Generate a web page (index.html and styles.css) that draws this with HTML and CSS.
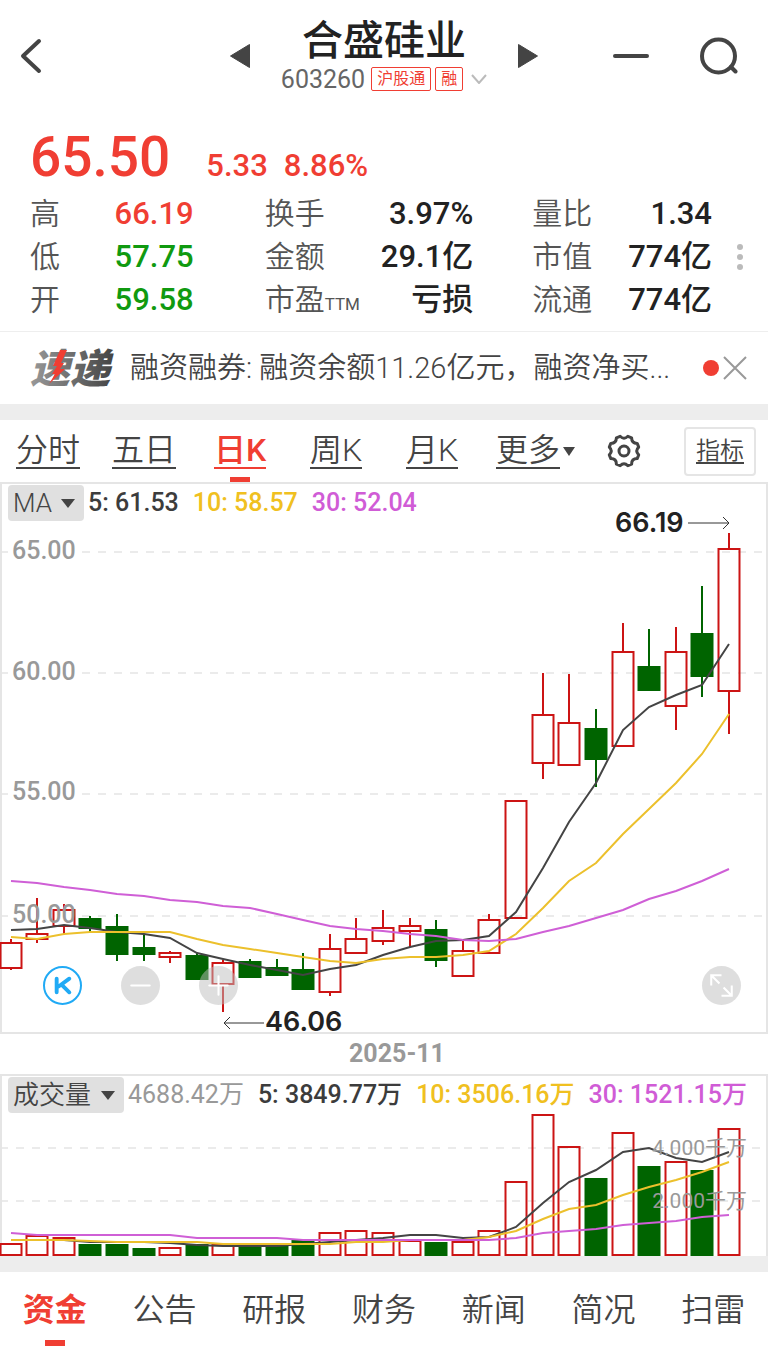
FILE: index.html
```html
<!DOCTYPE html>
<html lang="zh-CN">
<head>
    <meta charset="UTF-8">
    <meta name="viewport" content="width=device-width, initial-scale=1.0">
    <title>合盛硅业 603260</title>
    <link rel="stylesheet" href="styles.css">
</head>
<body>
    <header class="header">
        <div class="header-side">
            <button type="button" class="icon-btn" aria-label="返回">
                <svg width="22" height="36" viewBox="0 0 22 36"><path d="M19 3L3 18L19 33" fill="none" stroke="#444" stroke-width="4" stroke-linecap="round" stroke-linejoin="round"/></svg>
            </button>
            <button type="button" class="icon-btn" aria-label="上一只">
                <svg width="22" height="26" viewBox="0 0 22 26"><path d="M20.500 1.500V24.500L1.500 13Z" fill="#444" stroke="#444" stroke-linejoin="round"/></svg>
            </button>
        </div>
        <div class="stock">
            <h1>合盛硅业</h1>
            <div class="stock-sub">
                <span class="code">603260</span>
                <span class="tag">沪股通</span>
                <span class="tag">融</span>
                <svg class="chevron" width="16" height="10" viewBox="0 0 16 10"><path d="M1 1L8 9L15 1" fill="none" stroke="#bbb" stroke-width="2"/></svg>
            </div>
        </div>
        <div class="header-side header-right">
            <button type="button" class="icon-btn next" aria-label="下一只">
                <svg width="22" height="26" viewBox="0 0 22 26"><path d="M1.500 1.500V24.500L20.500 13Z" fill="#444" stroke="#444" stroke-linejoin="round"/></svg>
            </button>
            <button type="button" class="icon-btn" aria-label="删除自选">
                <svg width="38" height="6" viewBox="0 0 38 6"><path d="M3 3H35" stroke="#444" stroke-width="4" stroke-linecap="round"/></svg>
            </button>
            <button type="button" class="icon-btn" aria-label="搜索">
                <svg width="38" height="38" viewBox="0 0 38 38"><g fill="none" stroke="#444" stroke-width="4" stroke-linecap="round"><circle cx="18.500" cy="19" r="16.500"/><path d="M31 30L35.500 34.500"/></g></svg>
            </button>
        </div>
    </header>

    <section class="quote">
        <div class="price-row">
            <span class="price">65.50</span>
            <span class="change">5.33</span>
            <span class="change">8.86%</span>
        </div>
        <div class="stats-wrap">
            <table class="stats">
                <tr>
                    <th>高</th><td class="up">66.19</td>
                    <th>换手</th><td>3.97%</td>
                    <th>量比</th><td>1.34</td>
                </tr>
                <tr>
                    <th>低</th><td class="down">57.75</td>
                    <th>金额</th><td>29.1亿</td>
                    <th>市值</th><td>774亿</td>
                </tr>
                <tr>
                    <th>开</th><td class="down">59.58</td>
                    <th>市盈<small>TTM</small></th><td>亏损</td>
                    <th>流通</th><td>774亿</td>
                </tr>
            </table>
            <button type="button" class="icon-btn" aria-label="更多数据">
                <svg width="8" height="28" viewBox="0 0 8 28"><g fill="#bbb"><circle cx="4" cy="4" r="3"/><circle cx="4" cy="14" r="3"/><circle cx="4" cy="24" r="3"/></g></svg>
            </button>
        </div>
    </section>

    <section class="news">
        <svg class="news-logo" width="88" height="38" viewBox="0 0 88 38">
            <defs>
                <linearGradient id="metal" x1="0" y1="0" x2="1" y2="0">
                    <stop offset="0" stop-color="#999"/>
                    <stop offset="1" stop-color="#444"/>
                </linearGradient>
            </defs>
            <text x="0" y="34" fill="url(#metal)">速递</text>
            <path d="M30 1L23 17H27L22 25H25L19 35L35 20H30L34 14H31L37 1Z" fill="#f03e33"/>
        </svg>
        <a class="news-text" href="#news">融资融券: 融资余额11.26亿元，融资净买...</a>
        <span class="dot"></span>
        <button type="button" class="icon-btn" aria-label="关闭">
            <svg width="26" height="26" viewBox="0 0 26 26"><path d="M2 2L24 24M24 2L2 24" stroke="#999" stroke-width="2"/></svg>
        </button>
    </section>

    <nav class="periods">
        <a href="#min">分时</a>
        <a href="#five">五日</a>
        <a href="#day" class="active">日K</a>
        <a href="#week">周K</a>
        <a href="#month">月K</a>
        <a href="#more" class="more">更多</a>
        <button type="button" class="icon-btn" aria-label="设置">
            <svg width="34" height="34" viewBox="-17 -17 34 34"><g fill="none" stroke="#444" stroke-width="3" stroke-linejoin="round"><path d="M14.700 -3.900Q10.800 0 14.700 3.900L13.200 7.600Q7.600 7.600 7.600 13.200L3.900 14.700Q0 10.800 -3.900 14.700L-7.600 13.200Q-7.600 7.600 -13.200 7.600L-14.700 3.900Q-10.800 0 -14.700 -3.900L-13.200 -7.600Q-7.600 -7.600 -7.600 -13.200L-3.900 -14.700Q0 -10.800 3.900 -14.700L7.600 -13.200Q7.600 -7.600 13.200 -7.600Z"/><circle r="5"/></g></svg>
        </button>
        <button type="button" class="indicator-btn">指标</button>
    </nav>

    <section class="panel">
        <div class="legend">
            <span class="picker">
                <select aria-label="主图指标">
                    <option>MA</option>
                </select>
            </span>
            <span class="ma5">5: 61.53</span>
            <span class="ma10">10: 58.57</span>
            <span class="ma30">30: 52.04</span>
        </div>
        <svg id="kline" class="chart" viewBox="2 521 764 511">
            <g class="grid">
                <path d="M0 552H8M82 552H764M0 673H8M82 673H764M0 794H8M82 794H764M0 916H8M82 916H764"/>
            </g>
            <g class="plot"></g>
            <g class="axis">
                <text x="12" y="559">65.00</text>
                <text x="12" y="680">60.00</text>
                <text x="12" y="800">55.00</text>
                <text x="12" y="923">50.00</text>
            </g>
            <g class="extreme">
                <text x="615" y="532">66.19</text>
                <path d="M688 523H729M723 517L729 523L723 529"/>
                <text x="265" y="1031">46.06</text>
                <path d="M264 1023H224M230 1017L224 1023L230 1029"/>
            </g>
        </svg>
        <div class="tools">
            <button type="button" class="round round-k" aria-label="K线">
                <svg width="35" height="35" viewBox="-18 -18 36 36"><path d="M-6 -7V7M7 -7L-4 1M-1 -1L7 7" fill="none" stroke="#20aaf5" stroke-width="4" stroke-linecap="round" stroke-linejoin="round"/></svg>
            </button>
            <button type="button" class="round" aria-label="缩小">
                <svg width="39" height="39" viewBox="-19 -19 38 38"><path d="M-9 0H9" stroke="#fff" stroke-width="2" stroke-linecap="round"/></svg>
            </button>
            <button type="button" class="round" aria-label="放大">
                <svg width="39" height="39" viewBox="-19 -19 38 38"><path d="M-9 0H9M0 -9V9" stroke="#fff" stroke-width="2" stroke-linecap="round"/></svg>
            </button>
            <button type="button" class="round round-full" aria-label="全屏">
                <svg width="39" height="39" viewBox="-19 -19 38 38"><path d="M-10 0V-10H0M-10 -10L-2 -2M10 0V10H0M10 10L2 2" fill="none" stroke="#fff" stroke-width="2"/></svg>
            </button>
        </div>
    </section>

    <div class="date">2025-11</div>

    <section class="panel panel-volume">
        <div class="legend">
            <span class="picker">
                <select aria-label="副图指标">
                    <option>成交量</option>
                </select>
            </span>
            <span class="total">4688.42万</span>
            <span class="ma5">5: 3849.77万</span>
            <span class="ma10">10: 3506.16万</span>
            <span class="ma30">30: 1521.15万</span>
        </div>
        <svg id="volume" class="chart" viewBox="2 1113 764 143">
            <g class="grid"><path d="M0 1148H764M0 1201H764"/></g>
            <g class="plot"></g>
            <g class="axis axis-volume">
                <text x="747" y="1155">4.000千万</text>
                <text x="747" y="1208">2.000千万</text>
            </g>
        </svg>
    </section>

    <nav class="bottom-tabs">
        <a href="#fund" class="active">资金</a>
        <a href="#notice">公告</a>
        <a href="#report">研报</a>
        <a href="#finance">财务</a>
        <a href="#newslist">新闻</a>
        <a href="#profile">简况</a>
        <a href="#risk">扫雷</a>
    </nav>

    <script src="script.js"></script>
</body>
</html>
```

FILE: styles.css
```css
* {
    box-sizing: border-box;
}
body {
    margin: 0;
    background-color: #fff;
    color: #222;
    font-family: Roboto, "Noto Sans CJK SC", sans-serif;
}
a {
    color: inherit;
    text-decoration: none;
}
button, select {
    font-family: inherit;
    color: inherit;
    border: none;
    background: none;
    padding: 0;
    cursor: pointer;
}
svg {
    display: block;
}

/* header */
.header {
    display: grid;
    grid-template-columns: 1fr auto 1fr;
    gap: 30px;
    padding: 0 20px;
    height: 108px;
}
.header-side {
    display: flex;
    justify-content: space-between;
    align-items: center;
    height: 112px;
}
.header-right {
    gap: 50px;
    padding-right: 10px;
}
.next {
    margin-right: auto;
}
.stock {
    display: flex;
    flex-direction: column;
    align-items: center;
    padding-top: 18px;
}
h1 {
    margin: 0;
    font-size: 41px;
    line-height: 46px;
    font-weight: 500;
}
.stock-sub {
    display: flex;
    align-items: center;
    gap: 4px;
    height: 30px;
}
.code {
    margin-right: 2px;
    font-size: 25px;
    color: #666;
}
.tag {
    border: 1px solid #f03e33;
    border-radius: 2px;
    padding: 0 5px;
    font-size: 16px;
    line-height: 22px;
    color: #f03e33;
}
.chevron {
    margin-left: 4px;
}

/* quote */
.quote {
    padding: 14px 24px 10px 30px;
    border-bottom: 1px solid #eee;
}
.price-row {
    display: flex;
    align-items: baseline;
    gap: 16px;
    height: 70px;
    color: #f03e33;
}
.price {
    margin-right: 20px;
    font-size: 55px;
    line-height: 70px;
    font-weight: 500;
}
.change {
    font-size: 31px;
    font-weight: 500;
}
.stats-wrap {
    display: flex;
    align-items: center;
    gap: 24px;
    height: 129px;
}
.stats {
    width: 100%;
    table-layout: fixed;
    border-collapse: collapse;
    line-height: 43px;
    white-space: nowrap;
}
.stats th {
    width: 24%;
    padding: 0 0 0 71px;
    text-align: left;
    vertical-align: middle;
    font-size: 30px;
    font-weight: 350;
    color: #555;
}
.stats th:first-child {
    width: 10%;
    padding-left: 0;
}
.stats th:nth-child(5) {
    width: 18%;
    padding-left: 59px;
}
.stats td {
    width: 17%;
    padding: 0;
    text-align: right;
    vertical-align: middle;
    font-size: 31px;
    font-weight: 500;
}
.stats td:nth-child(2) {
    width: 14%;
}
.stats small {
    font-size: 17px;
    line-height: 20px;
    font-weight: 400;
}
.up {
    color: #f03e33;
}
.down {
    color: #109a10;
}

/* news */
.news {
    display: flex;
    align-items: center;
    height: 72px;
    padding: 0 20px 0 30px;
}
.news-logo {
    flex: none;
    margin-right: 12px;
    overflow: visible;
    font-size: 40px;
    font-weight: 900;
    font-style: italic;
}
.news-text {
    margin-right: auto;
    white-space: nowrap;
    font-size: 29px;
    line-height: 40px;
    font-weight: 350;
    color: #444;
}
.dot {
    width: 16px;
    height: 16px;
    margin-right: 3px;
    border-radius: 50%;
    background-color: #f03e33;
}

/* period tabs */
.periods {
    display: grid;
    grid-template-columns: repeat(8, 1fr);
    justify-items: center;
    align-items: center;
    height: 78px;
    border-top: 16px solid #ededed;
    font-size: 32px;
    font-weight: 350;
    color: #444;
}
.periods a {
    position: relative;
    line-height: 34px;
    border-bottom: 2px solid #444;
}
.periods .active {
    color: #f03e33;
    border-color: #f03e33;
    font-weight: 500;
}
.periods .active::after {
    content: "";
    position: absolute;
    left: 50%;
    bottom: -16px;
    width: 20px;
    height: 6px;
    margin-left: -10px;
    background-color: #f03e33;
}
.more::after {
    content: "";
    position: absolute;
    left: 100%;
    top: 14px;
    margin-left: 3px;
    border: 6px solid transparent;
    border-top: 9px solid #444;
    border-bottom: none;
}
.indicator-btn {
    width: 72px;
    height: 49px;
    border: 2px solid #e5e5e5;
    border-radius: 4px;
    font-size: 24px;
    font-weight: 350;
    line-height: 40px;
    text-decoration: underline;
    text-underline-offset: 3px;
}

/* charts */
.panel {
    position: relative;
    border: 2px solid #e5e5e5;
}
.panel-volume {
    border-bottom: none;
}
.legend {
    display: flex;
    align-items: center;
    gap: 14px;
    height: 37px;
    padding-left: 6px;
    font-size: 25px;
    line-height: 36px;
    font-weight: 500;
    white-space: nowrap;
}
.picker {
    position: relative;
    margin-right: -10px;
}
.picker::after {
    content: "";
    position: absolute;
    right: 9px;
    top: 14px;
    border: 7px solid transparent;
    border-top: 9px solid #444;
    border-bottom: none;
    pointer-events: none;
}
.picker select {
    appearance: none;
    display: block;
    height: 36px;
    padding: 0 32px 0 5px;
    border-radius: 4px;
    background-color: #e0e0e0;
    font-size: 26px;
    font-weight: 350;
    color: #444;
}
.ma5 {
    color: #3c3c3c;
}
.ma10 {
    color: #f0c020;
}
.ma30 {
    color: #d05cd6;
}
.total {
    font-weight: 400;
    color: #999;
}
.chart {
    width: 100%;
    height: auto;
    overflow: visible;
}
.grid {
    fill: none;
    stroke: #e5e5e5;
    stroke-width: 1.5;
    stroke-dasharray: 8 8;
}
.plot path {
    fill: none;
    stroke-width: 2;
}
.plot .rise {
    stroke: #cc1414;
}
.plot .fall {
    stroke: #006400;
    fill: #006400;
}
.plot .line5 {
    stroke: #444;
}
.plot .line10 {
    stroke: #ecc02c;
}
.plot .line30 {
    stroke: #cf5fd6;
}
.axis {
    font-size: 25px;
    font-weight: 500;
    fill: #999;
}
.axis-volume {
    font-size: 21px;
    font-weight: 400;
    text-anchor: end;
}
.extreme text {
    font-family: Inter, sans-serif;
    font-size: 27px;
    font-weight: 600;
    fill: #222;
}
.extreme path {
    fill: none;
    stroke: #333;
}
.tools {
    position: absolute;
    left: 41px;
    right: 25px;
    bottom: 27px;
    display: flex;
    gap: 39px;
}
.round {
    width: 39px;
    height: 39px;
    border-radius: 50%;
    background-color: rgba(190, 190, 190, 0.5);
}
.round-k {
    border: 2px solid #20aaf5;
    background-color: #fff;
}
.round-full {
    margin-left: auto;
}
.date {
    padding-left: 26px;
    line-height: 40px;
    text-align: center;
    font-size: 25px;
    font-weight: 700;
    color: #999;
}

/* bottom tabs */
.bottom-tabs {
    display: grid;
    grid-template-columns: repeat(7, 1fr);
    height: 96px;
    border-top: 16px solid #ededed;
    text-align: center;
    font-size: 32px;
    font-weight: 350;
    line-height: 76px;
    color: #444;
}
.bottom-tabs .active {
    position: relative;
    color: #f03e33;
    font-weight: 700;
}
.bottom-tabs .active::after {
    content: "";
    position: absolute;
    left: 50%;
    bottom: 6px;
    width: 20px;
    height: 6px;
    margin-left: -10px;
    background-color: #f03e33;
}
```

FILE: script.js
```js
// [type, high, body top, body bottom, low, volume top]
const days = [
    ['rise', 939, 943, 968, 970, 1244],
    ['rise', 898, 934, 939, 943, 1236],
    ['rise', 904, 910, 926, 934, 1238],
    ['fall', 916, 919, 928, 932, 1245],
    ['fall', 914, 927, 954, 961, 1245],
    ['fall', 934, 948, 954, 961, 1249],
    ['rise', 951, 953, 957, 963, 1248],
    ['fall', 953, 956, 979, 979, 1245],
    ['rise', 960, 963, 984, 1012, 1245],
    ['fall', 959, 962, 977, 977, 1246],
    ['fall', 959, 968, 975, 975, 1246],
    ['fall', 953, 970, 989, 989, 1241],
    ['rise', 934, 949, 992, 996, 1233],
    ['rise', 918, 939, 953, 953, 1231],
    ['rise', 910, 928, 941, 945, 1233],
    ['rise', 918, 926, 931, 947, 1241],
    ['fall', 920, 930, 960, 967, 1243],
    ['rise', 940, 951, 976, 976, 1242],
    ['rise', 914, 920, 953, 953, 1231],
    ['rise', 801, 801, 918, 918, 1182],
    ['rise', 673, 715, 763, 779, 1115],
    ['rise', 674, 723, 765, 765, 1147],
    ['fall', 709, 729, 759, 787, 1179],
    ['rise', 623, 652, 746, 746, 1133],
    ['fall', 629, 667, 690, 690, 1167],
    ['rise', 627, 652, 706, 730, 1162],
    ['fall', 586, 634, 676, 697, 1171],
    ['rise', 533, 549, 691, 734, 1129]
];

const priceLines = {
    line5: [930, 929, 925, 928, 932, 934, 938, 953, 959, 965, 970, 975, 969, 965, 955, 947, 941, 940, 936, 912, 868, 822, 783, 730, 707, 695, 685, 644],
    line10: [937, 939, 934, 932, 932, 932, 932, 939, 945, 949, 953, 957, 961, 963, 959, 957, 957, 955, 951, 934, 908, 881, 863, 834, 809, 783, 754, 714],
    line30: [881, 883, 887, 890, 894, 896, 900, 902, 906, 908, 914, 920, 926, 929, 931, 934, 936, 940, 941, 939, 932, 926, 918, 910, 899, 891, 881, 869]
};

const volumeLines = {
    line5: [1240, 1240, 1240, 1242, 1242, 1242, 1243, 1245, 1246, 1246, 1246, 1244, 1242, 1240, 1238, 1235, 1235, 1238, 1237, 1227, 1203, 1182, 1170, 1152, 1148, 1158, 1162, 1152],
    line10: [1240, 1240, 1240, 1241, 1242, 1242, 1242, 1242, 1244, 1244, 1244, 1244, 1244, 1242, 1242, 1240, 1240, 1240, 1237, 1231, 1219, 1209, 1205, 1195, 1187, 1180, 1172, 1162],
    line30: [1233, 1235, 1235, 1235, 1235, 1235, 1235, 1238, 1238, 1238, 1238, 1240, 1240, 1240, 1240, 1240, 1240, 1240, 1240, 1238, 1233, 1231, 1229, 1225, 1223, 1221, 1217, 1215]
};

function xAt(i) {
    return Math.round(10.5 + i * 26.61);
}

function addPath(plot, cls, d) {
    const path = document.createElementNS('http://www.w3.org/2000/svg', 'path');
    path.setAttribute('class', cls);
    path.setAttribute('d', d);
    plot.appendChild(path);
}

function addLines(plot, lines) {
    for (const name in lines) {
        addPath(plot, name, 'M' + lines[name].map((y, i) => xAt(i) + ' ' + y).join('L'));
    }
}

const kline = document.querySelector('#kline .plot');
const volume = document.querySelector('#volume .plot');

days.forEach(([type, high, top, bottom, low, vol], i) => {
    const x = xAt(i);
    addPath(kline, type, `M${x} ${high}V${top}M${x} ${bottom}V${low}M${x - 10.5} ${top}h21V${bottom}h-21Z`);
    addPath(volume, type, `M${x - 10.5} ${vol}h21V1255h-21Z`);
});

addLines(kline, priceLines);
addLines(volume, volumeLines);
```
